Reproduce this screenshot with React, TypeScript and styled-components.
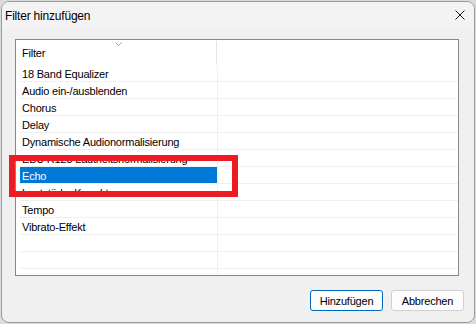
import React from "react";
import styled, { createGlobalStyle } from "styled-components";

const Global = createGlobalStyle`
  html, body { margin: 0; padding: 0; background: #dcdcdc; }
  body { font-family: "Liberation Sans", Arial, sans-serif; font-size: 11px; letter-spacing: -0.2px; color: #000; }
`;

const Dialog = styled.div`
  position: relative;
  box-sizing: border-box;
  margin: 1px;
  width: 474px;
  height: 322px;
  border: 1px solid #9a9a9a;
  border-radius: 8px;
  background: #f0f0f0;
  overflow: hidden;
  display: flex;
  flex-direction: column;
`;

const TitleBar = styled.div`
  height: 28px;
  display: flex;
  align-items: center;
  justify-content: space-between;
  padding: 0 9px 0 3px;
  background: #f3f3f3;
  font-size: 12px;
  letter-spacing: -0.2px;
  color: #000;
`;

const CloseIcon = styled.svg`
  width: 10px;
  height: 10px;
  margin-top: -3px;
`;

const Body = styled.div`
  padding: 9px 15px 0 13px;
`;

const ListBox = styled.div`
  box-sizing: border-box;
  height: 237px;
  border: 1px solid #828790;
  background: #fff;
  overflow: hidden;
`;

const Header = styled.div`
  height: 25px;
  display: flex;
`;

const HeaderCell = styled.div`
  position: relative;
  width: 200px;
  display: flex;
  align-items: center;
  padding-left: 6px;
  box-sizing: border-box;
`;

const SortChevron = styled.svg`
  position: absolute;
  left: 99px;
  top: 2px;
  width: 7px;
  height: 4px;
`;

const HeaderDivider = styled.div`
  width: 1px;
  margin-top: 1px;
  height: 24px;
  background: #e5e5e5;
`;

const Rows = styled.div`
  padding-left: 4px;
`;

const Row = styled.div`
  display: flex;
  height: 17px;
  box-sizing: border-box;
  border-bottom: 1px solid #f0f0f0;
`;

const NameCell = styled.div<{ $selected?: boolean }>`
  width: 197px;
  box-sizing: border-box;
  padding-left: 2px;
  padding-top: 1px;
  display: flex;
  align-items: center;
  white-space: nowrap;
  overflow: hidden;
  background: ${(p) => (p.$selected ? "#0078d7" : "transparent")};
  color: ${(p) => (p.$selected ? "#fff" : "#000")};
`;

const GridLine = styled.div`
  width: 1px;
  background: #f0f0f0;
`;

const ButtonRow = styled.div`
  display: flex;
  justify-content: flex-end;
  gap: 8px;
  padding: 14px 10px 0 0;
`;

const Button = styled.button<{ $primary?: boolean }>`
  box-sizing: border-box;
  width: 73px;
  height: 21px;
  padding: 0;
  border-radius: 3px;
  border: 1px solid ${(p) => (p.$primary ? "#0067c0" : "#d0d0d0")};
  background: #fdfdfd;
  font-family: "Liberation Sans", Arial, sans-serif;
  font-size: 11px;
  letter-spacing: -0.2px;
  color: #000;
`;

const Highlight = styled.div`
  position: absolute;
  left: 7px;
  top: 153px;
  width: 229px;
  height: 42px;
  box-sizing: border-box;
  border: 6px solid #ed1c24;
  pointer-events: none;
`;

const filters = [
  "18 Band Equalizer",
  "Audio ein-/ausblenden",
  "Chorus",
  "Delay",
  "Dynamische Audionormalisierung",
  "EBU R128 Lautheitsnormalisierung",
  "Echo",
  "Lautstärke Korrektur",
  "Tempo",
  "Vibrato-Effekt",
  "",
  "",
  "",
];

export default function App() {
  return (
    <>
      <Global />
      <Dialog>
        <TitleBar>
          <span>Filter hinzufügen</span>
          <CloseIcon viewBox="0 0 10 10">
            <path d="M0.5 0.5 L9.5 9.5 M9.5 0.5 L0.5 9.5" stroke="#1a1a1a" strokeWidth="1" fill="none" />
          </CloseIcon>
        </TitleBar>
        <Body>
          <ListBox>
            <Header>
              <HeaderCell>
                <SortChevron viewBox="0 0 7 4">
                  <path d="M0.5 0.5 L3.5 3.5 L6.5 0.5" stroke="#9a9a9a" strokeWidth="1" fill="none" />
                </SortChevron>
                Filter
              </HeaderCell>
              <HeaderDivider />
            </Header>
            <Rows>
              {filters.map((f, i) => (
                <Row key={i}>
                  <NameCell $selected={f === "Echo"}>{f}</NameCell>
                  <GridLine />
                </Row>
              ))}
            </Rows>
          </ListBox>
        </Body>
        <ButtonRow>
          <Button $primary>Hinzufügen</Button>
          <Button>Abbrechen</Button>
        </ButtonRow>
        <Highlight />
      </Dialog>
    </>
  );
}
